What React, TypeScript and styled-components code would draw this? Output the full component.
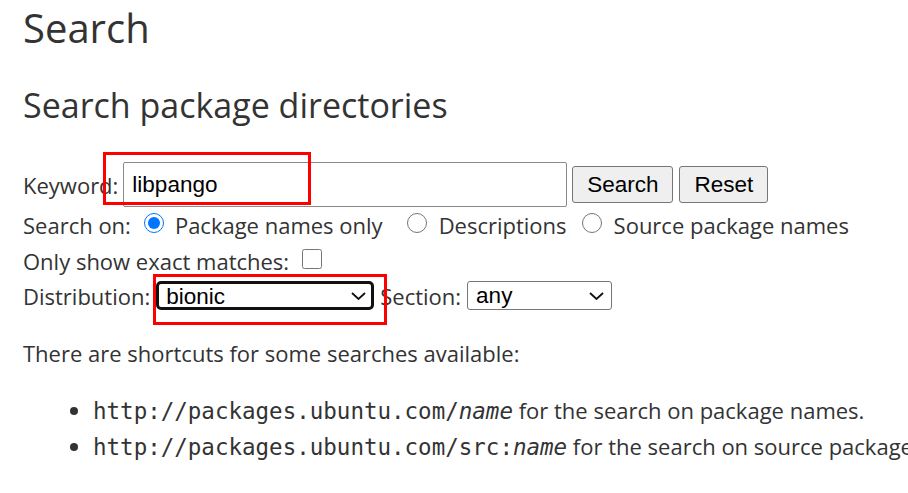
import React from "react";
import styled, { createGlobalStyle } from "styled-components";

const GlobalStyle = createGlobalStyle`
  html, body {
    margin: 0;
    padding: 0;
    background: #ffffff;
  }
  body {
    font-family: "Open Sans", "Noto Sans", sans-serif;
    color: #333333;
    overflow: hidden;
  }
`;

const Page = styled.div`
  position: relative;
  padding: 0 23px;
  width: 908px;
  height: 493px;
  box-sizing: border-box;
  overflow: hidden;
`;

const Title = styled.h1`
  margin: 3px 0 0;
  font-size: 40px;
  line-height: 50px;
  font-weight: 400;
`;

const Subtitle = styled.h2`
  margin: 30px 0 0;
  font-size: 34px;
  line-height: 44px;
  font-weight: 400;
`;

const Form = styled.form`
  margin: 35px 0 0;
  display: flex;
  flex-direction: column;
  font-size: 22px;
  line-height: 28px;
`;

const Row = styled.div<{ $h: number }>`
  display: flex;
  align-items: center;
  height: ${(p) => p.$h}px;
  white-space: nowrap;
`;

const Label = styled.span<{ $mr?: number }>`
  margin-right: ${(p) => p.$mr ?? 0}px;
`;

const TextInput = styled.input`
  box-sizing: border-box;
  width: 444px;
  height: 45px;
  margin: 0 5px 0 0;
  padding: 0 8px;
  border: 1px solid #8a8a8a;
  border-radius: 2px;
  font-family: "Liberation Sans", Arial, sans-serif;
  font-size: 22.5px;
  color: #000;
  background: #fff;
  outline: none;
`;

const Button = styled.button<{ $w: number }>`
  box-sizing: border-box;
  width: ${(p) => p.$w}px;
  height: 37px;
  margin: 0 6px 0 0;
  padding: 0;
  border: 1px solid #767676;
  border-radius: 3px;
  background: #efefef;
  font-family: "Liberation Sans", Arial, sans-serif;
  font-size: 22.5px;
  color: #000;
`;

const Radio = styled.input<{ $ml: number; $mr: number }>`
  width: 20px;
  height: 20px;
  margin: 0 ${(p) => p.$mr}px 4px ${(p) => p.$ml}px;
  accent-color: #0075ff;
`;

const Check = styled.input`
  width: 20px;
  height: 20px;
  margin: 0 0 4px 13px;
`;

const SelectBox = styled.span<{ $w: number }>`
  position: relative;
  display: inline-flex;
  width: ${(p) => p.$w}px;
  height: 29px;
  margin: 0 6px;
`;

const Select = styled.select<{ $focus?: boolean }>`
  appearance: none;
  -webkit-appearance: none;
  box-sizing: border-box;
  width: 100%;
  height: 100%;
  margin: 0;
  padding: 0 0 0 ${(p) => (p.$focus ? 7 : 8)}px;
  border: ${(p) => (p.$focus ? "3px solid #111111" : "1px solid #767676")};
  border-radius: ${(p) => (p.$focus ? 5 : 3)}px;
  outline: none;
  background: #fff;
  font-family: "Liberation Sans", Arial, sans-serif;
  font-size: 22.5px;
  line-height: 25px;
  color: #000;
`;

const Chevron = styled.svg`
  position: absolute;
  right: 8px;
  top: 11px;
  width: 15px;
  height: 8px;
  pointer-events: none;
`;

const Paragraph = styled.p`
  margin: 27px 0 0;
  font-size: 22px;
  line-height: 28px;
`;

const List = styled.ul`
  margin: 26px 0 0;
  padding-left: 70px;
  font-size: 22px;
  line-height: 35px;
`;

const Item = styled.li`
  white-space: nowrap;
`;

const Code = styled.code`
  font-family: "DejaVu Sans Mono", monospace;
  font-size: 22.5px;
`;

const Highlight = styled.div<{ $x: number; $y: number; $w: number; $h: number }>`
  position: absolute;
  left: ${(p) => p.$x}px;
  top: ${(p) => p.$y}px;
  width: ${(p) => p.$w}px;
  height: ${(p) => p.$h}px;
  border: 3px solid #ff0000;
  box-sizing: border-box;
  pointer-events: none;
`;

function Dropdown({ width, value, focus }: { width: number; value: string; focus?: boolean }) {
  return (
    <SelectBox $w={width}>
      <Select $focus={focus} defaultValue={value}>
        <option value={value}>{value}</option>
      </Select>
      <Chevron viewBox="0 0 15 8">
        <path d="M1 1 L7.5 7 L14 1" fill="none" stroke="#111" strokeWidth="1.8" />
      </Chevron>
    </SelectBox>
  );
}

export default function App() {
  return (
    <>
      <GlobalStyle />
      <Page>
        <Title>Search</Title>
        <Subtitle>Search package directories</Subtitle>
        <Form onSubmit={(e) => e.preventDefault()}>
          <Row $h={45}>
            <Label $mr={5}>Keyword:</Label>
            <TextInput type="text" defaultValue="libpango" />
            <Button type="submit" $w={101}>Search</Button>
            <Button type="reset" $w={89}>Reset</Button>
          </Row>
          <Row $h={36}>
            <Label>Search on:</Label>
            <Radio type="radio" name="searchon" defaultChecked $ml={13} $mr={11} />
            <Label>Package names only</Label>
            <Radio type="radio" name="searchon" $ml={24} $mr={12} />
            <Label>Descriptions</Label>
            <Radio type="radio" name="searchon" $ml={15} $mr={12} />
            <Label>Source package names</Label>
          </Row>
          <Row $h={36}>
            <Label>Only show exact matches:</Label>
            <Check type="checkbox" />
          </Row>
          <Row $h={33}>
            <Label>Distribution:</Label>
            <Dropdown width={218} value="bionic" focus />
            <Label>Section:</Label>
            <Dropdown width={145} value="any" />
          </Row>
        </Form>
        <Paragraph>There are shortcuts for some searches available:</Paragraph>
        <List>
          <Item>
            <Code>
              http://packages.ubuntu.com/<i>name</i>
            </Code>{" "}
            for the search on package names.
          </Item>
          <Item>
            <Code>
              http://packages.ubuntu.com/src:<i>name</i>
            </Code>{" "}
            for the search on source package names.
          </Item>
        </List>
        <Highlight $x={103} $y={152} $w={208} $h={53} />
        <Highlight $x={153} $y={274} $w={234} $h={51} />
      </Page>
    </>
  );
}
